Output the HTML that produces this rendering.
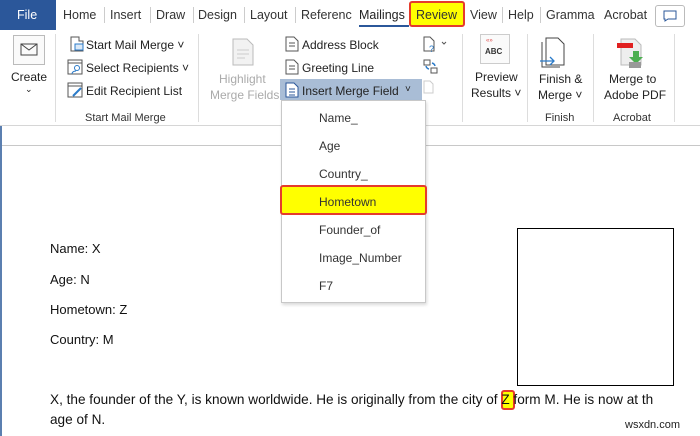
<!DOCTYPE html><html><head><style>
*{margin:0;padding:0;box-sizing:border-box}
body{width:700px;height:436px;overflow:hidden;background:#fff;font-family:"Liberation Sans",sans-serif;position:relative;color:#222}
.a{position:absolute;white-space:nowrap}
.tab{position:absolute;top:8px;font-size:12.5px;color:#333}
.sep{position:absolute;top:7px;width:1px;height:16px;background:#ccc}
.r{font-size:12px;color:#222}
.g{font-size:11px;color:#333}
.vs{position:absolute;top:34px;width:1px;height:88px;background:#ddd}
.doc{font-size:13px;color:#111;transform-origin:0 0}
.mi{position:absolute;left:319px;font-size:12px;color:#333}
</style></head><body>
<div class="a" style="left:0;top:0;width:56px;height:30px;background:#2b579a"></div>
<div class="a" style="left:17px;top:8px;color:#fff;font-size:12.5px">File</div>
<div class="tab" style="left:63px">Home</div><div class="sep" style="left:104px"></div>
<div class="tab" style="left:110px">Insert</div><div class="sep" style="left:150px"></div>
<div class="tab" style="left:156px">Draw</div><div class="sep" style="left:193px"></div>
<div class="tab" style="left:198px">Design</div><div class="sep" style="left:244px"></div>
<div class="tab" style="left:250px">Layout</div><div class="sep" style="left:295px"></div>
<div class="tab" style="left:301px;width:52px;overflow:hidden">Referenc</div>
<div class="tab" style="left:359px;color:#222">Mailings</div>
<div class="a" style="left:359px;top:25px;width:50px;height:2px;background:#2b579a"></div>
<div class="a" style="left:409px;top:1px;width:56px;height:26px;background:#ffff00;border:2px solid #e53b2c;border-radius:3px"></div>
<div class="tab" style="left:416px">Review</div>
<div class="tab" style="left:470px">View</div><div class="sep" style="left:502px"></div>
<div class="tab" style="left:508px">Help</div><div class="sep" style="left:540px"></div>
<div class="tab" style="left:546px">Gramma</div>
<div class="tab" style="left:604px">Acrobat</div>
<div class="a" style="left:655px;top:5px;width:30px;height:22px;border:1px solid #bbb;border-radius:3px"></div>
<svg class="a" style="left:663px;top:10px" width="14" height="12"><path d="M1 1h12v8H5l-3 2V9H1z" fill="none" stroke="#2b579a"/></svg>
<div class="a" style="left:0;top:30px;width:700px;height:96px;background:#fff;border-bottom:1px solid #d6d6d6"></div>
<div class="a" style="left:13px;top:35px;width:32px;height:30px;border:1px solid #bbb;background:#fafafa"></div>
<svg class="a" style="left:20px;top:43px" width="18" height="13"><path d="M1 1h16v11H1zM1 1l8 6 8-6" fill="none" stroke="#444"/></svg>
<div class="a r" style="left:11px;top:70px">Create</div>
<div class="a r" style="left:25px;top:84px;font-size:9px">⌄</div>
<div class="vs" style="left:55px"></div>
<svg class="a" style="left:68px;top:36px" width="16" height="16"><path d="M3 1h8v4h4v10H3z" fill="none" stroke="#555"/><rect x="7" y="8" width="8" height="6" fill="#dbe9f7" stroke="#2b7bc9"/></svg>
<div class="a r" style="left:86px;top:38px">Start Mail Merge ˅</div>
<svg class="a" style="left:67px;top:59px" width="16" height="16"><rect x="1" y="1" width="14" height="14" fill="none" stroke="#555"/><path d="M1 4h14" stroke="#555"/><circle cx="10" cy="9" r="2.5" fill="none" stroke="#2b7bc9"/><path d="M5 15c0-3 4-3 4-3" stroke="#2b7bc9" fill="none"/></svg>
<div class="a r" style="left:86px;top:61px">Select Recipients ˅</div>
<svg class="a" style="left:67px;top:82px" width="16" height="16"><rect x="1" y="1" width="14" height="14" fill="none" stroke="#555"/><path d="M1 4h14" stroke="#555"/><path d="M6 14l8-8" stroke="#2b7bc9" stroke-width="2"/></svg>
<div class="a r" style="left:86px;top:84px">Edit Recipient List</div>
<div class="a g" style="left:85px;top:112px">Start Mail Merge</div>
<div class="vs" style="left:198px"></div>
<svg class="a" style="left:231px;top:38px" width="24" height="28"><path d="M2 1h14l6 6v20H2z" fill="#f2f2f2" stroke="#bbb"/><path d="M6 12h12M6 16h12M6 20h8" stroke="#ccc"/></svg>
<div class="a" style="left:219px;top:72px;font-size:12px;color:#aaa">Highlight</div>
<div class="a" style="left:210px;top:88px;font-size:12px;color:#aaa">Merge Fields</div>
<svg class="a" style="left:285px;top:36px" width="14" height="16"><path d="M1 1h8l4 4v10H1z" fill="none" stroke="#555"/><path d="M4 7h6M4 10h6" stroke="#555"/></svg>
<div class="a r" style="left:302px;top:38px">Address Block</div>
<svg class="a" style="left:285px;top:59px" width="14" height="16"><path d="M1 1h8l4 4v10H1z" fill="none" stroke="#555"/><path d="M4 7h6M4 10h6" stroke="#555"/></svg>
<div class="a r" style="left:302px;top:61px">Greeting Line</div>
<div class="a" style="left:280px;top:79px;width:142px;height:21px;background:#a9bdd6"></div>
<svg class="a" style="left:285px;top:82px" width="14" height="16"><path d="M1 1h8l4 4v10H1z" fill="#fff" stroke="#2b579a"/><path d="M4 7h6M4 10h6M4 13h6" stroke="#2b579a"/></svg>
<div class="a r" style="left:302px;top:84px">Insert Merge Field</div>
<div class="a r" style="left:405px;top:84px;font-size:10px">˅</div>
<svg class="a" style="left:422px;top:36px" width="28" height="68"><path d="M2 1h6l4 4v10H2z" fill="none" stroke="#555"/><text x="7" y="16" font-size="9" fill="#2b7bc9" font-family="Liberation Sans">?</text><path d="M20 6l2 2 2-2" stroke="#555" fill="none"/><rect x="2" y="24" width="6" height="5" fill="none" stroke="#555"/><rect x="9" y="32" width="6" height="5" fill="none" stroke="#555"/><path d="M10 27a4 4 0 0 1 3 3M7 33a4 4 0 0 1-3-3" stroke="#2b7bc9" fill="none" stroke-width="1.5"/><path d="M2 45h6l3 3v9H2z" fill="none" stroke="#ccc"/></svg>
<div class="vs" style="left:462px"></div>
<div class="a" style="left:480px;top:34px;width:30px;height:30px;border:1px solid #ccc;background:#fafafa"></div>
<div class="a" style="left:486px;top:38px;font-size:6px;color:#e05050">«»</div>
<div class="a" style="left:485px;top:47px;font-size:8px;color:#333;font-weight:bold">ABC</div>
<div class="a r" style="left:475px;top:70px">Preview</div>
<div class="a r" style="left:471px;top:86px">Results ˅</div>
<div class="vs" style="left:527px"></div>
<svg class="a" style="left:540px;top:37px" width="30" height="32"><path d="M6 1h12l6 6v21H6z" fill="#fff" stroke="#444"/><path d="M2 5v25h18" fill="none" stroke="#444"/><path d="M0 24h14M10 20l4 4-4 4" stroke="#2b7bc9" fill="none" stroke-width="1.3"/></svg>
<div class="a r" style="left:539px;top:72px">Finish &amp;</div>
<div class="a r" style="left:538px;top:88px">Merge ˅</div>
<div class="a g" style="left:545px;top:112px">Finish</div>
<div class="vs" style="left:593px"></div>
<svg class="a" style="left:615px;top:37px" width="32" height="32"><path d="M6 2h14l6 6v20H6z" fill="#eee" stroke="#bbb"/><rect x="2" y="6" width="16" height="5" fill="#e02020"/><path d="M18 14h6v6h4l-7 7-7-7h4z" fill="#4caf50"/><rect x="14" y="25" width="12" height="6" fill="#999"/></svg>
<div class="a r" style="left:609px;top:72px">Merge to</div>
<div class="a r" style="left:604px;top:88px">Adobe PDF</div>
<div class="a g" style="left:613px;top:112px">Acrobat</div>
<div class="vs" style="left:674px"></div>
<div class="a" style="left:0;top:145px;width:700px;height:1px;background:#c8c8c8"></div>
<div class="a" style="left:0;top:126px;width:2px;height:310px;background:#5b7fb0"></div>
<div class="a doc" style="left:50px;top:241px">Name: X</div>
<div class="a doc" style="left:50px;top:272px">Age: N</div>
<div class="a doc" style="left:50px;top:302px">Hometown: Z</div>
<div class="a doc" style="left:50px;top:332px">Country: M</div>
<div class="a" style="left:517px;top:228px;width:157px;height:158px;border:1px solid #000"></div>
<div class="a" style="left:501px;top:390px;width:14px;height:20px;background:#ffff00;border:2px solid #e53b2c;border-radius:3px"></div>
<div class="a doc" style="left:50px;top:392px;font-size:13.6px">X, the founder of the Y, is known worldwide. He is originally from the city of Z form M. He is now at th</div>
<div class="a doc" style="left:50px;top:412px;font-size:13.6px">age of N.</div>
<div class="a" style="left:625px;top:419px;font-size:11px;color:#222">wsxdn.com</div>
<div class="a" style="left:281px;top:100px;width:145px;height:203px;background:#fff;border:1px solid #c8c8c8;box-shadow:1px 2px 3px rgba(0,0,0,.15)"></div>
<div class="a" style="left:280px;top:185px;width:147px;height:30px;background:#ffff00;border:2px solid #e53b2c;border-radius:3px"></div>
<div class="mi" style="top:111px">Name_</div>
<div class="mi" style="top:139px">Age</div>
<div class="mi" style="top:167px">Country_</div>
<div class="mi" style="top:195px">Hometown</div>
<div class="mi" style="top:223px">Founder_of</div>
<div class="mi" style="top:251px">Image_Number</div>
<div class="mi" style="top:279px">F7</div>
</body></html>
